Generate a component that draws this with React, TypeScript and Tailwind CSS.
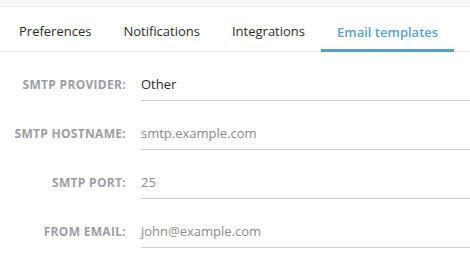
import React from "react";

const tabs = ["Preferences", "Notifications", "Integrations", "Email templates"];

const fields = [
  { label: "SMTP PROVIDER:", value: "Other", dark: true },
  { label: "SMTP HOSTNAME:", value: "smtp.example.com", dark: false },
  { label: "SMTP PORT:", value: "25", dark: false },
  { label: "FROM EMAIL:", value: "john@example.com", dark: false },
];

export default function App() {
  return (
    <div
      className="w-[470px] h-[264px] bg-white overflow-hidden"
      style={{ fontFamily: '"Open Sans", "Noto Sans", sans-serif' }}
    >
      <div className="h-[7px] bg-[#f7f7f7] border-b border-[#ededed]" />
      <div className="flex pl-[3px] border-b border-[#ececec] h-[45px]">
        {tabs.map((t, i) => {
          const active = i === tabs.length - 1;
          return (
            <div
              key={t}
              className={
                active
                  ? "px-4 pt-[9px] whitespace-nowrap flex items-center text-[13px] font-semibold text-[#5aa3c9] border-b-[3px] border-[#54a0c6] -mb-px"
                  : "px-4 pt-[9px] pb-[3px] whitespace-nowrap flex items-center text-[13px] text-[#2b2b2b]"
              }
            >
              {t}
            </div>
          );
        })}
      </div>
      <div className="mt-[17px] flex flex-col gap-[17px]">
        {fields.map((f) => (
          <div key={f.label} className="flex items-stretch h-[32px]">
            <div className="w-[126px] flex items-center justify-end whitespace-nowrap text-[12px] font-bold text-[#9d9da3] tracking-[0.3px]">
              {f.label}
            </div>
            <div
              className={
                "ml-[15px] flex-1 flex items-center border-b border-[#cfcfcf] text-[13px] " +
                (f.dark ? "text-[#2b2b2b]" : "text-[#8a8a8a]")
              }
            >
              {f.value}
            </div>
          </div>
        ))}
      </div>
    </div>
  );
}
